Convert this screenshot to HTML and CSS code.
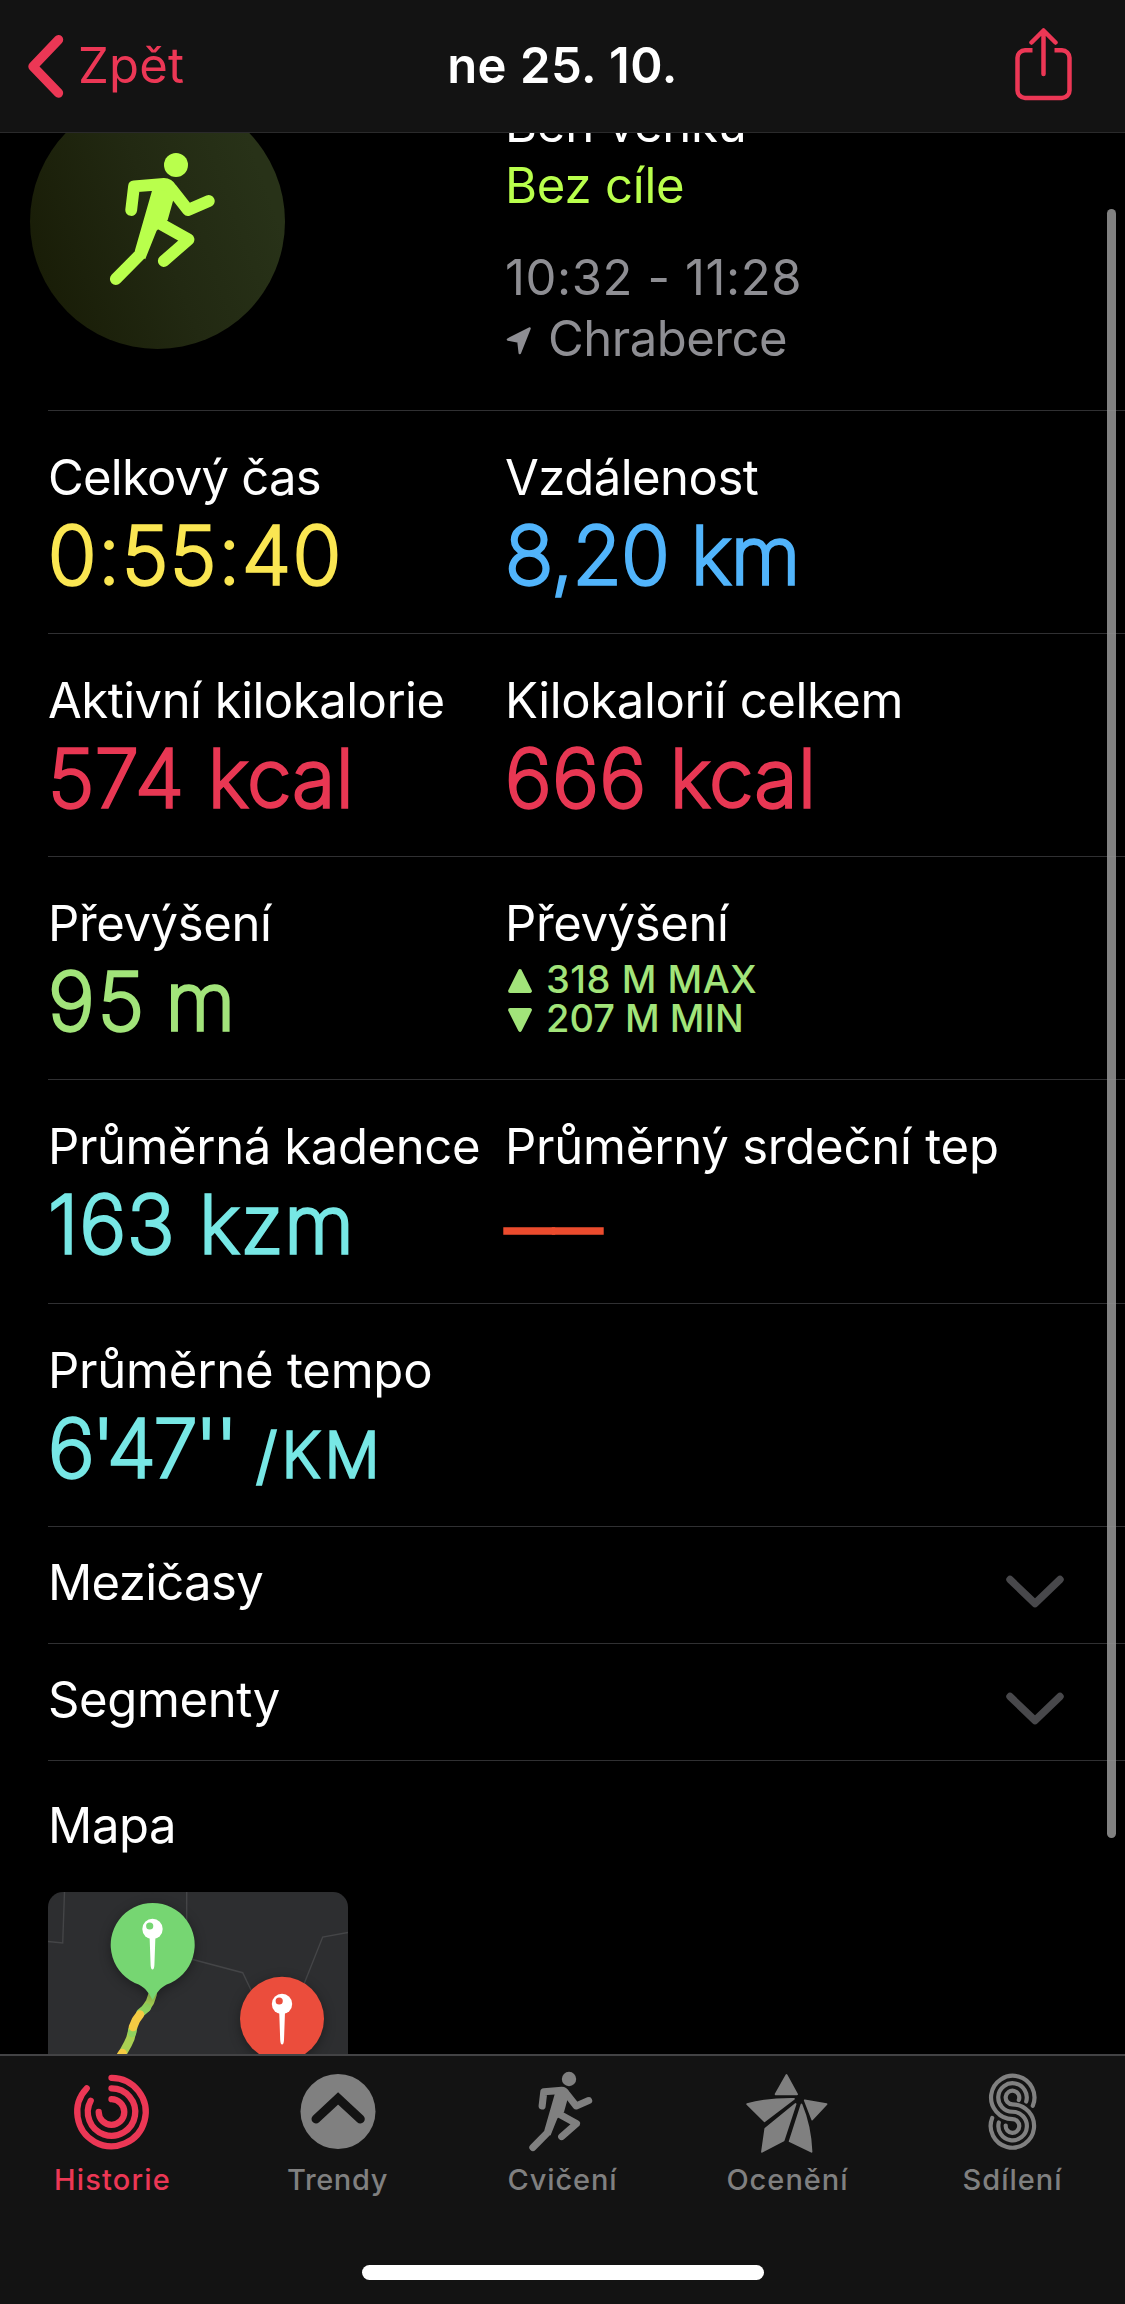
FILE: index.html
```html
<!DOCTYPE html>
<html lang="cs">
<head>
<meta charset="utf-8">
<title>ne 25. 10.</title>
<link rel="stylesheet" href="styles.css">
</head>
<body>
<div class="app">
  <header class="navbar">
    <a class="back">
      <svg class="back-icon" viewBox="0 0 48 64"><path d="M38.5 5.7 13 32.4 38.5 59"/></svg>
      <span class="back-label">Zpět</span>
    </a>
    <h1 class="title">ne 25. 10.</h1>
    <svg class="share-icon" viewBox="0 0 64 76"><path d="M23.5 22.300H16a7.500 7.500 0 0 0-7.500 7.500v32.600a7.500 7.500 0 0 0 7.500 7.500h37a7.500 7.500 0 0 0 7.500-7.500V29.800a7.500 7.500 0 0 0-7.500-7.500h-7.500"/><path class="round" d="M34.500 3.500v42.500M22.500 14.500 34.500 2.500l12 12"/></svg>
  </header>

  <main class="content">
    <section class="hero">
      <div class="badge">
        <svg class="badge-icon" viewBox="30 94 255 255">
          <g id="runner">
            <circle cx="176" cy="165" r="12"/>
            <path d="M152 190.700 156 180h11l6.500 19.300-5.800 20.700-11.100 10.700-11.400 28.600-10.400-8.600z"/>
            <path class="limb" d="M131.200 210 134 186.400 164 184q4.500 0 7.500 5l16.500 21 20.800-9M159 223l29.500 16.500-24.700 21.500M140 254.500 115.800 279"/>
          </g>
        </svg>
      </div>
      <div class="summary">
        <p class="line ls-a">Běh venku</p>
        <p class="line goal">Bez cíle</p>
        <p class="line muted time">10:32 - 11:28</p>
        <p class="line muted place"><svg class="location-icon" viewBox="0 0 26 28"><path d="M23.500 1.500 2 12.500l10.500 2L13.800 26z"/></svg><span>Chraberce</span></p>
      </div>
    </section>

    <section class="row">
      <div class="metric"><h2 class="label ls-e">Celkový čas</h2><p class="value yellow">0:55:40</p></div>
      <div class="metric"><h2 class="label ls-c">Vzdálenost</h2><p class="value blue">8,20 km</p></div>
    </section>
    <section class="row">
      <div class="metric"><h2 class="label ls-c">Aktivní kilokalorie</h2><p class="value red">574 kcal</p></div>
      <div class="metric"><h2 class="label ls-b">Kilokalorií celkem</h2><p class="value red">666 kcal</p></div>
    </section>
    <section class="row">
      <div class="metric"><h2 class="label ls-b">Převýšení</h2><p class="value green">95 m</p></div>
      <div class="metric"><h2 class="label ls-b">Převýšení</h2>
        <ul class="range">
          <li><svg class="triangle" viewBox="0 0 24 24"><path d="M12 2 22 22H2z"/></svg><span class="max">318 M MAX</span></li>
          <li><svg class="triangle" viewBox="0 0 24 24"><path d="M12 22 22 2H2z"/></svg><span>207 M MIN</span></li>
        </ul>
      </div>
    </section>
    <section class="row tall">
      <div class="metric"><h2 class="label ls-b">Průměrná kadence</h2><p class="value cyan">163 kzm</p></div>
      <div class="metric"><h2 class="label ls-a">Průměrný srdeční tep</h2><p class="value orange">––</p></div>
    </section>
    <section class="row">
      <div class="metric"><h2 class="label ls-a">Průměrné tempo</h2><p class="value cyan"><span class="pace">6'47''</span><span class="unit">/KM</span></p></div>
    </section>
    <section class="row fold">
      <h2 class="label ls-d">Mezičasy</h2>
      <svg class="chevron" viewBox="0 0 58 34"><path d="M4 4.500 29 28.500 54 4.500"/></svg>
    </section>
    <section class="row fold">
      <h2 class="label ls-b">Segmenty</h2>
      <svg class="chevron" viewBox="0 0 58 34"><path d="M4 4.500 29 28.500 54 4.500"/></svg>
    </section>
    <section class="row map-row">
      <h2 class="label ls-b">Mapa</h2>
      <svg class="map" viewBox="0 0 300 200">
        <path class="road" d="M16.500 0 14.700 51 0 49.500M138.700 0v40M140 66.300l54.700 14.400 12 25M254 97l20.700-52L300 40.500"/>
        <g class="route">
          <path stroke="#a5cf54" d="M104.700 102 102 110 98 116"/>
          <path stroke="#8fd25e" d="M99 115.500 92.500 121"/>
          <path stroke="#a9d052" d="M84.300 138q-1 8-4.500 14l-5 9"/>
          <path stroke="#8fd25e" d="M85 136 84 141"/>
          <path stroke="#f4ca43" d="M92 122.500 88 128 85 135M74.500 161 70 168"/>
        </g>
        <path class="drop green-drop" d="M104.700 108c-4-7-7-12-14-15.500a42 42 0 1 1 28 0c-7 3.500-10 8.500-14 15.500z"/>
        <circle class="drop red-drop" cx="234" cy="126.700" r="42"/>
        <path class="needle" d="M101.600 45h5.800l-1 28q-.3 4.500-1.900 4.500t-1.900-4.500zM231.200 120h5.800l-1 28q-.3 4.500-1.900 4.500t-1.900-4.500z"/>
        <circle class="needle" cx="104.500" cy="37" r="10.200"/><circle class="green-drop" cx="101.700" cy="34" r="3.600"/>
        <circle class="needle" cx="234" cy="112" r="10.200"/><circle class="red-drop" cx="231.200" cy="109" r="3.600"/>
      </svg>
    </section>
  </main>

  <nav class="tabbar">
    <div class="tabs">
      <a class="tab active">
        <svg class="tab-icon" viewBox="0 0 90 90"><path class="stroke rings" d="M43.500 10.800A34.200 34.200 0 1 1 18.700 21.400M43.500 21.300A23.700 23.700 0 1 1 22.700 33.700M43.500 32.200A12.800 12.800 0 1 1 30.700 45"/></svg>
        <span class="t1">Historie</span>
      </a>
      <a class="tab">
        <svg class="tab-icon" viewBox="0 0 90 90"><circle cx="45" cy="44.500" r="37.500"/><path class="trend" d="M23 52 45.100 31.500 67.300 52"/></svg>
        <span class="t2">Trendy</span>
      </a>
      <a class="tab">
        <svg class="tab-icon" viewBox="0 0 90 90"><use href="#runner" transform="translate(51 12) scale(.6) translate(-176 -165)"/></svg>
        <span class="t3">Cvičení</span>
      </a>
      <a class="tab">
        <svg class="tab-icon" viewBox="0 0 90 90"><path class="star" d="M43.500 8 54 27.300H32.600zM4.200 37.200Q25 31.500 51 31.800L21.400 54.200zM61.800 33.400 83.500 37.200 69.200 52.500zM52.600 37 40.600 73.500 19 84.800 22.300 61.600zM58.500 37.500Q67.500 59 68.500 84.800L46.700 74.300z"/></svg>
        <span class="t4">Ocenění</span>
      </a>
      <a class="tab">
        <svg class="tab-icon" viewBox="0 0 90 90"><path class="stroke coil" d="M64.800 38.800A21.700 21.700 0 1 0 44.500 52.200A6.800 6.800 0 1 1 37.700 58.500M58.200 34.500A14.250 14.250 0 1 0 44.500 44.750A14.250 14.250 0 1 1 30.800 55.500M50.800 33A6.800 6.800 0 1 0 44.500 37.300A21.700 21.700 0 1 1 24.200 51"/></svg>
        <span class="t4">Sdílení</span>
      </a>
    </div>
    <div class="home-indicator"></div>
  </nav>
  <div class="scrollbar"></div>
</div>
</body>
</html>
```
FILE: styles.css
```css
* { box-sizing: border-box; margin: 0; padding: 0; }

body {
  background: #000;
  color: #fff;
  font-family: Inter, "Liberation Sans", sans-serif;
  font-size: 49px;
  line-height: 60px;
}

svg { display: block; flex: none; }

.app {
  position: relative;
  display: flex;
  flex-direction: column;
  width: 1125px;
  height: 2304px;
  overflow: hidden;
}

/* Navigation bar */
.navbar {
  display: grid;
  grid-template-columns: 1fr auto 1fr;
  align-items: start;
  height: 133px;
  padding: 0 45px 0 20px;
  background: #131313;
  border-bottom: 1px solid #2a2a2b;
}
.back { display: flex; color: #ec3755; }
.back-icon { width: 48px; height: 64px; margin-top: 34px; }
.back-icon path { fill: none; stroke: #ec3755; stroke-width: 9.4; stroke-linecap: round; stroke-linejoin: round; }
.back-label { margin: 36px 0 0 10px; letter-spacing: .2px; }
.title { margin: 36px 0 0 25px; font-size: 49px; font-weight: 600; letter-spacing: .5px; }
.share-icon { justify-self: end; width: 64px; height: 76px; margin: 28px 7px 0 0; }
.share-icon path { fill: none; stroke: #ec3755; stroke-width: 4.5; }
.share-icon .round { stroke-linecap: round; stroke-linejoin: round; }

/* Scrolled content */
.content { flex: 1; overflow: hidden; min-height: 0; }
.hero { display: flex; height: 316px; margin-top: -39px; padding-left: 30px; }
.badge { width: 255px; height: 255px; margin-right: 220px; border-radius: 50%; background: linear-gradient(70deg, #191d07 10%, #222912 50%, #283218 85%); }
.badge-icon { width: 255px; height: 255px; color: #b9ff4c; fill: currentColor; }
.limb { fill: none; stroke: currentColor; stroke-width: 11.8; stroke-linecap: round; stroke-linejoin: round; }
.summary { line-height: 61px; white-space: nowrap; }
.goal { color: #b9ff4c; letter-spacing: -.2px; }
.muted { color: #8e8e93; }
.time { margin-top: 31px; letter-spacing: .6px; }
.place { display: flex; letter-spacing: -.5px; }
.location-icon { width: 26px; height: 28px; margin: 19px 16px 0 1px; fill: #8e8e93; stroke: #8e8e93; stroke-width: 2.5; stroke-linejoin: round; }

.row {
  display: grid;
  grid-template-columns: 457px 1fr;
  height: 223px;
  margin-left: 48px;
  padding-top: 37px;
  border-top: 1px solid #303032;
  white-space: nowrap;
}
.row.tall { height: 224px; }
.label { font-size: 49px; font-weight: 400; }
.ls-a { letter-spacing: -.2px; }
.ls-b { letter-spacing: -.38px; }
.ls-c { letter-spacing: -.5px; }
.ls-d { letter-spacing: -.68px; }
.ls-e { letter-spacing: -.75px; }

/* A thin weight with an outline gives the figures soft, rounded ends */
.value {
  margin-top: 5px;
  font-size: 80px;
  font-weight: 200;
  line-height: 84px;
  letter-spacing: .6px;
  -webkit-text-stroke: 3.4px currentColor;
}
.yellow { color: #fae652; letter-spacing: 1.8px; }
.blue { color: #51b4fb; letter-spacing: -.6px; }
.red { color: #e83753; }
.green { color: #a2e47a; letter-spacing: 3px; word-spacing: -7px; }
.cyan { color: #77e7e5; letter-spacing: 1px; }
.orange { margin-top: 7px; color: #eb4c2e; font-size: 97px; letter-spacing: 0; }
.pace { letter-spacing: -2.6px; }
.unit { margin-left: 21px; font-size: 61px; letter-spacing: 5px; }

.range { margin-top: 6px; list-style: none; color: #a2e47a; font-size: 38px; font-weight: 450; line-height: 39px; }
.range li { display: flex; align-items: center; }
.range .max { letter-spacing: .5px; }
.triangle { width: 24px; height: 24px; margin: 2px 14px 0 3px; fill: #a2e47a; stroke: #a2e47a; stroke-width: 3.8; stroke-linejoin: round; }

.row.fold { display: flex; justify-content: space-between; height: 117px; padding: 26px 61px 0 0; }
.chevron { width: 58px; height: 34px; margin-top: 22px; }
.chevron path { fill: none; stroke: #48484b; stroke-width: 7.4; stroke-linecap: round; stroke-linejoin: round; }

.row.map-row { display: block; height: 360px; padding-top: 35px; }
.map { width: 300px; height: 200px; margin-top: 36px; border-radius: 15px; background: #2d2e30; }
.road { fill: none; stroke: #444547; stroke-width: 1.4; }
.route { fill: none; stroke-width: 8.5; stroke-linecap: round; stroke-linejoin: round; }
.drop { filter: drop-shadow(0 3px 6px rgba(0, 0, 0, .35)); }
.green-drop { fill: #76d672; }
.red-drop { fill: #eb4d3c; }
.needle { fill: #fff; }

/* Tab bar */
.tabbar { height: 250px; background: #131313; border-top: 2px solid #434345; }
.tabs { display: grid; grid-template-columns: repeat(5, 1fr); height: 209px; padding-top: 11px; }
.tab {
  display: flex;
  flex-direction: column;
  align-items: center;
  gap: 5px;
  color: #808080;
  font-size: 29px;
  font-weight: 450;
  line-height: 36px;
}
.tab.active { color: #ec3755; }
.tab-icon { width: 90px; height: 90px; fill: currentColor; }
.stroke { fill: none; stroke: currentColor; stroke-linecap: round; }
.rings { stroke-width: 6.3; }
.coil { stroke-width: 4.2; }
.trend { fill: none; stroke: #131313; stroke-width: 9; stroke-linecap: round; }
.star { stroke: currentColor; stroke-width: 1.8; stroke-linejoin: round; }
.t1 { letter-spacing: 1.2px; }
.t2 { letter-spacing: .6px; }
.t3 { letter-spacing: .85px; }
.t4 { letter-spacing: 1px; }
.home-indicator { width: 402px; height: 15px; margin: 0 auto; border-radius: 8px; background: #fff; }

.scrollbar { position: absolute; top: 209px; right: 9px; width: 9px; height: 1629px; border-radius: 5px; background: rgba(148, 148, 148, .87); }
```
